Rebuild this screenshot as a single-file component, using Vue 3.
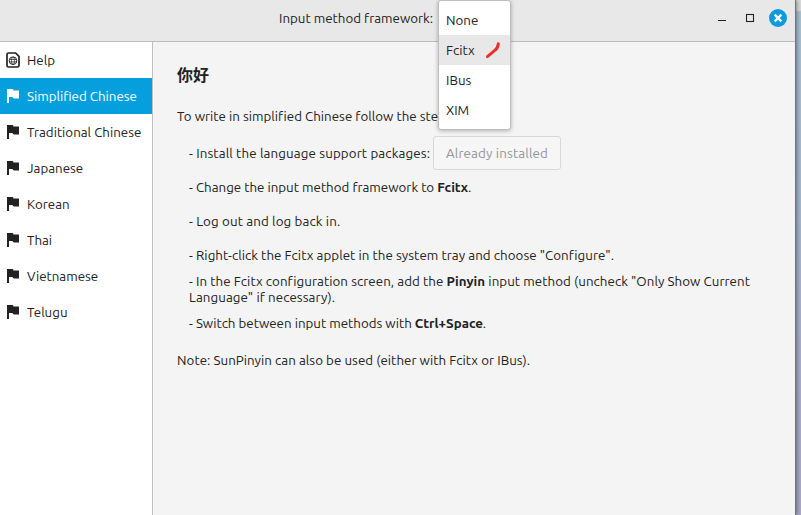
<script setup>
const languages = [
  'Simplified Chinese',
  'Traditional Chinese',
  'Japanese',
  'Korean',
  'Thai',
  'Vietnamese',
  'Telugu',
]
const frameworks = ['None', 'Fcitx', 'IBus', 'XIM']
const selected = 'Fcitx'
</script>

<template>
  <div class="desktop">
    <div class="window">
      <header class="titlebar">
        <div class="picker">
          <span class="label">Input method framework:</span>
          <ul class="menu">
            <li v-for="f in frameworks" :key="f" :class="{ active: f === selected }">
              <span class="label">{{ f }}</span>
              <svg v-if="f === selected" class="mark" width="16" height="18" viewBox="0 0 16 18">
                <path d="M1.4 15.6 L8.2 9.9 Q12 7.2 12.3 2.8" fill="none" stroke="#ea3029" stroke-width="3" stroke-linecap="round" stroke-linejoin="round" />
              </svg>
            </li>
          </ul>
        </div>
        <div class="controls">
          <svg width="10" height="18" viewBox="0 0 10 18"><path d="M1 11.5h8" stroke="#222" stroke-width="1" /></svg>
          <svg width="10" height="18" viewBox="0 0 10 18"><rect x="1.5" y="5.5" width="7" height="7" fill="none" stroke="#222" stroke-width="1.1" /></svg>
          <svg width="18" height="18" viewBox="0 0 18 18">
            <circle cx="9" cy="9" r="9" fill="#0b9bdc" />
            <path d="M5.7 5.7l6.6 6.6M12.3 5.7l-6.6 6.6" stroke="#fff" stroke-width="2.4" />
          </svg>
        </div>
      </header>
      <div class="body">
        <nav class="sidebar">
          <div class="item">
            <svg width="14" height="16" viewBox="0 0 14 16">
              <path d="M2.5 1H9.6L13 4.4V13.5Q13 15 11.5 15H2.5Q1 15 1 13.5V2.5Q1 1 2.5 1Z" fill="none" stroke="#222" stroke-width="1.7" />
              <circle cx="7" cy="8.7" r="3.8" fill="none" stroke="#222" stroke-width="1" />
              <ellipse cx="7" cy="8.7" rx="1.5" ry="3.8" fill="none" stroke="#222" stroke-width="0.7" />
              <path d="M3.4 7.5h7.2M3.4 9.9h7.2" stroke="#222" stroke-width="0.7" />
            </svg>
            <span class="label">Help</span>
          </div>
          <div v-for="(l, i) in languages" :key="l" class="item" :class="{ current: i === 0 }">
            <svg width="14" height="16" viewBox="0 0 14 16">
              <path d="M1 1H6.5Q7.3 1.1 7.5 2.5H13V10.5H8Q7 10.4 6.5 9H3V15H1Z" fill="currentColor" />
            </svg>
            <span class="label">{{ l }}</span>
          </div>
        </nav>
        <main class="content">
          <h1>你好</h1>
          <p class="intro">To write in simplified Chinese follow the steps</p>
          <div class="steps">
            <div class="install"><span class="label">- Install the language support packages:</span><button disabled>Already installed</button></div>
            <p class="change">- Change the input method framework to <b>Fcitx</b>.</p>
            <p class="logout">- Log out and log back in.</p>
            <p class="tray">- Right-click the Fcitx applet in the system tray and choose "Configure".</p>
            <p class="pinyin"><span>- In the Fcitx configuration screen, add the <b>Pinyin</b> input method (uncheck "Only Show Current</span><br><span class="second">Language" if necessary).</span></p>
            <p class="toggle">- Switch between input methods with <b>Ctrl+Space</b>.</p>
          </div>
          <p class="note">Note: SunPinyin can also be used (either with Fcitx or IBus).</p>
        </main>
      </div>
    </div>
  </div>
</template>

<style>
body { margin: 0; overflow: hidden; }
</style>

<style scoped>
* { box-sizing: border-box; }
.desktop { width: 801px; height: 515px; background: linear-gradient(#d9d9d9 0 10px, #a9c0d0 12px, #a5b7cc 180px, #a9abc8 400px, #aaa8c6); font: 13.33px/16px Ubuntu, "Noto Sans", "Noto Sans CJK SC", sans-serif; color: #222; overflow: hidden; }
.window { width: 796px; height: 515px; background: #f4f4f4; border-right: 1px solid #6d7180; box-shadow: 1px 0 4px rgba(0,0,0,.4); display: flex; flex-direction: column; }
.titlebar { height: 42px; flex: none; display: flex; align-items: flex-start; background: #e8e8e8; border-bottom: 1px solid #bcbcbc; padding-left: 279px; }
.picker { position: relative; height: 36px; display: flex; align-items: center; white-space: nowrap; }
.label { padding-top: 2px; }
.menu { position: absolute; z-index: 2; left: 159px; top: 0; width: 73px; height: 130px; margin: 0; padding: 4px 0; list-style: none; background: #fff; border: 1px solid #bdbdbd; border-radius: 3px; box-shadow: 0 1px 4px rgba(0,0,0,.28); }
.menu li { height: 30px; padding: 0 8px 0 7px; display: flex; align-items: center; justify-content: space-between; }
.menu .active { background: #e8e8e8; }
.controls { margin-left: auto; height: 36px; padding-right: 8px; display: flex; align-items: center; }
.controls svg + svg { margin-left: 18px; }
.controls svg:last-child { margin-left: 14px; }
.body { flex: 1; display: flex; min-height: 0; }
.sidebar { width: 153px; flex: none; background: #fff; border-right: 1px solid #bfbfbf; white-space: nowrap; }
.item { height: 36px; display: flex; align-items: center; gap: 7px; padding-left: 6px; }
.current { background: #059fdd; color: #fff; }
.content { flex: 1; padding: 22px 24px 0; white-space: nowrap; }
h1, p { margin: 0; }
h1 { font: bold 16px/20px "Noto Sans CJK SC", sans-serif; }
.intro { margin-top: 25px; letter-spacing: .01px; }
.steps { padding-left: 12px; margin-top: 11px; }
.install { display: flex; align-items: center; width: 372px; height: 34px; letter-spacing: .13px; }
button { font: inherit; letter-spacing: .15px; color: #929595; background: #f6f6f6; border: 1px solid #d8d8d8; border-radius: 3px; width: 128px; height: 34px; padding: 2px 0 0; margin-left: auto; }
.change { margin-top: 10px; }
.logout, .tray { margin-top: 18px; }
.logout { letter-spacing: .13px; }
.tray { letter-spacing: .05px; }
.pinyin { letter-spacing: .06px; }
.second { letter-spacing: .08px; }
.pinyin, .toggle { margin-top: 10px; }
.note { margin-top: 21px; letter-spacing: .04px; }
</style>
